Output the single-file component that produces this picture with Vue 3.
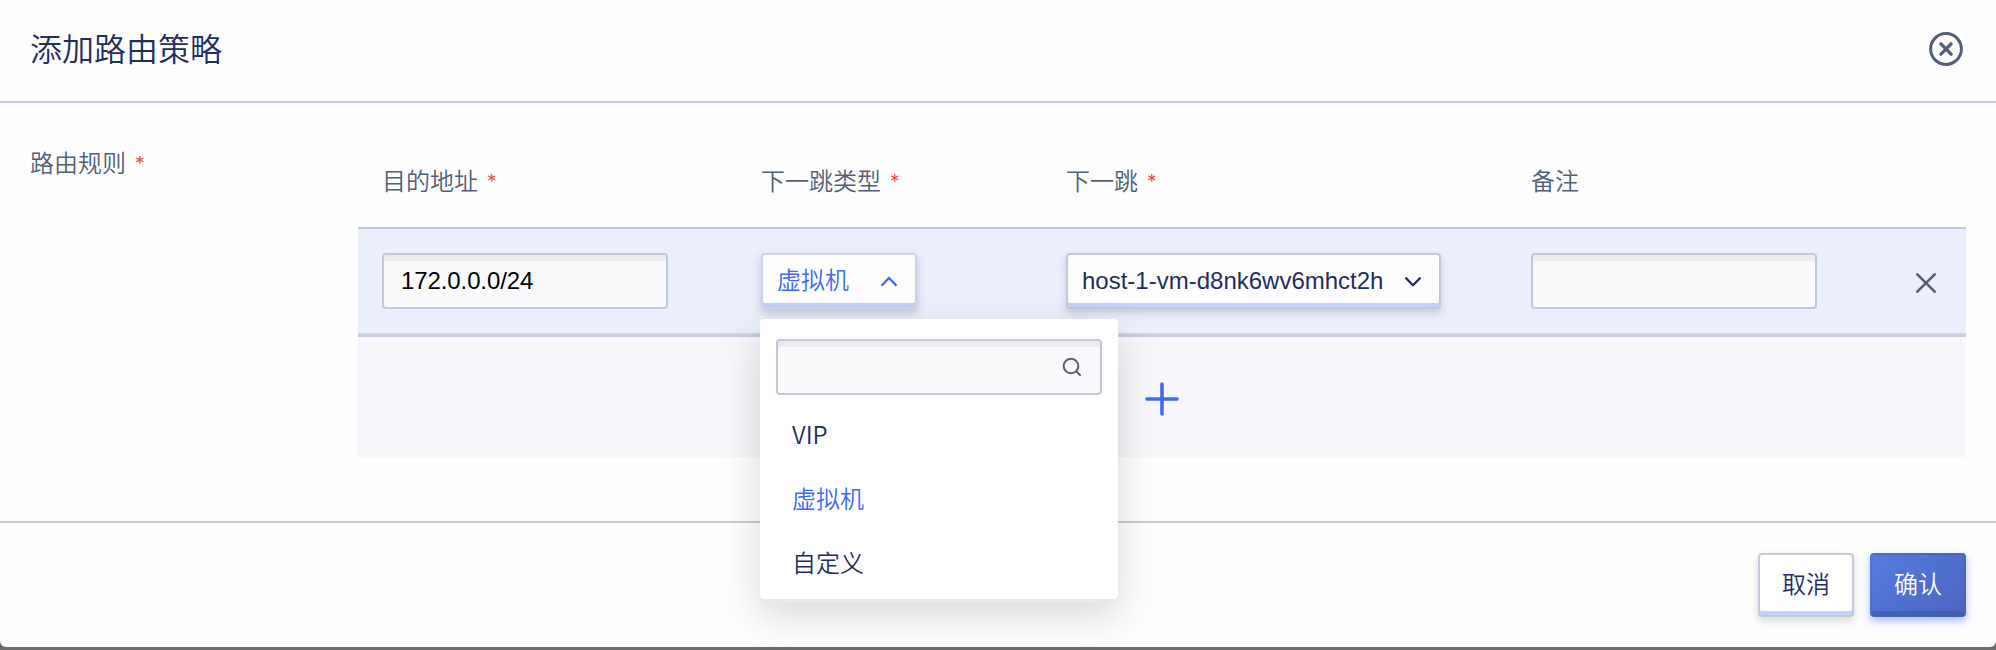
<script setup>
import { ref } from 'vue'

const columns = [
  { label: '目的地址', required: true },
  { label: '下一跳类型', required: true },
  { label: '下一跳', required: true },
  { label: '备注', required: false },
]
const options = ['VIP', '虚拟机', '自定义']
const hopType = ref('虚拟机')
const address = ref('172.0.0.0/24')
const hop = ref('host-1-vm-d8nk6wv6mhct2h')
const remark = ref('')
const keyword = ref('')
</script>

<template>
  <div class="page">
    <section class="dialog">
      <header class="head">
        <h1>添加路由策略</h1>
        <svg class="close" viewBox="0 0 34 34" fill="none" stroke="#525f76" stroke-linecap="round">
          <circle cx="17" cy="17" r="15.4" stroke-width="3" />
          <path d="M11.9 11.9 22.1 22.1M22.1 11.9 11.9 22.1" stroke-width="3.4" />
        </svg>
      </header>

      <main class="body">
        <div class="field-label">路由规则<i class="star">*</i></div>
        <div class="table">
          <div class="grid titles">
            <div v-for="c in columns" :key="c.label" class="title">
              {{ c.label }}<i v-if="c.required" class="star">*</i>
            </div>
          </div>
          <div class="grid row">
            <input v-model="address" class="input" />
            <div class="anchor">
              <button class="select open">
                <span>{{ hopType }}</span>
                <svg class="chevron" viewBox="0 0 18 11"><path d="M1.5 9.7 9 1.9l7.5 7.8" /></svg>
              </button>
              <div class="menu">
                <label class="search">
                  <input v-model="keyword" class="input" />
                  <svg viewBox="0 0 20 20" fill="none" stroke="#525f76" stroke-width="2" stroke-linecap="round">
                    <circle cx="9" cy="9" r="7.3" />
                    <path d="m14.3 14.3 3.7 3.7" />
                  </svg>
                </label>
                <div
                  v-for="o in options"
                  :key="o"
                  class="option"
                  :class="{ active: o === hopType }"
                  @click="hopType = o"
                >{{ o }}</div>
              </div>
            </div>
            <button class="select wide">
              <span>{{ hop }}</span>
              <svg class="chevron" viewBox="0 0 18 11"><path d="m1.5 1.6 7.5 7.6 7.5-7.6" /></svg>
            </button>
            <input v-model="remark" class="input" />
            <svg class="remove" viewBox="0 0 20 20"><path d="m1.3 1.3 17.4 17.4M18.7 1.3 1.3 18.7" /></svg>
          </div>
          <div class="add">
            <svg viewBox="0 0 34 34"><path d="M17 2v30M2 17h30" /></svg>
          </div>
        </div>
      </main>

      <footer class="foot">
        <button class="btn">取消</button>
        <button class="btn primary">确认</button>
      </footer>
    </section>
  </div>
</template>

<style>
body {
  background: #6b6b6d;
}
</style>

<style scoped>
.page,
.page * {
  box-sizing: border-box;
}
.page {
  height: 650px;
  overflow: hidden;
  background: #6b6b6d;
  color: #1f2d5f;
  font: 350 24px/32px "Noto Sans CJK SC", sans-serif;
}
.dialog {
  display: flex;
  flex-direction: column;
  height: 647px;
  background: #fefefe;
  border-radius: 0 0 6px 6px;
}
.head {
  display: flex;
  align-items: center;
  justify-content: space-between;
  flex: none;
  height: 103px;
  padding: 0 33px 4px 30px;
  border-bottom: 2px solid #c4c9dc;
}
h1 {
  margin: 0 0 3px;
  font-size: 32px;
  font-weight: 350;
  line-height: 44px;
}
.close {
  width: 34px;
  height: 34px;
}
.body {
  display: flex;
  flex: none;
  height: 418px;
  padding: 0 30px;
}
.field-label {
  flex: none;
  width: 328px;
  padding-top: 43px;
  color: #525f76;
}
.star {
  margin-left: 9px;
  color: #e8513f;
  font: 400 19px/1 Inter, sans-serif;
  vertical-align: 2px;
}
.table {
  flex: 1;
}
.grid {
  display: grid;
  grid-template-columns: 379px 305px 465px 385px 1fr;
  padding-left: 24px;
}
.titles {
  height: 124px;
  padding-top: 61px;
  color: #525f76;
}
.row {
  height: 110px;
  padding-top: 24px;
  background: #ebeffc;
  border-top: 2px solid #c1c8d9;
  border-bottom: 2px solid #c4c9dc;
  box-shadow: inset 0 -2px #cfd5e8;
}
.input {
  display: block;
  width: 286px;
  height: 56px;
  margin: 0;
  padding: 0 17px;
  border: 2px solid #c1c8d9;
  border-radius: 4px;
  outline: 0;
  background: #fafafc;
  box-shadow: inset 0 6px #ececee;
  color: #000;
  font: 24px "Liberation Sans", Arial, sans-serif;
  letter-spacing: -0.1px;
}
.anchor {
  position: relative;
}
.select {
  display: flex;
  align-items: center;
  justify-content: space-between;
  width: 156px;
  height: 56px;
  padding: 0 17px 0 14px;
  border: 2px solid #c1c8d9;
  border-radius: 4px;
  background: #fefefe;
  box-shadow: inset 0 -4px #c4d2f6, 0 4px 8px rgba(60, 65, 85, 0.22);
  color: #1f2d5f;
  font: 24px/32px "Liberation Sans", Arial, "Noto Sans CJK SC", sans-serif;
}
.select.open {
  border-color: #d0d4e8;
  box-shadow: inset 0 -4px #c1cff5, 0 4px 10px rgba(60, 65, 85, 0.24);
  color: #4069f6;
  font-weight: 350;
}
.select.wide {
  width: 375px;
}
.chevron {
  width: 18px;
  height: 11px;
  fill: none;
  stroke: currentColor;
  stroke-width: 2.3;
}
.menu {
  position: absolute;
  z-index: 5;
  top: 66px;
  left: -1px;
  width: 358px;
  height: 280px;
  padding: 20px 16px 0;
  border-radius: 4px;
  background: #fff;
  box-shadow: 0 4px #e9e9e9, 0 16px 40px rgba(0, 0, 0, 0.16);
}
.search {
  display: block;
  position: relative;
  margin-bottom: 7px;
}
.search .input {
  width: 326px;
}
.search svg {
  position: absolute;
  top: 18px;
  right: 20px;
  width: 20px;
  height: 20px;
}
.option {
  height: 64px;
  padding-left: 16px;
  line-height: 64px;
}
.option.active {
  color: #4069f6;
}
.remove {
  width: 20px;
  height: 20px;
  margin-top: 20px;
  fill: none;
  stroke: #525f76;
  stroke-width: 2.6;
  stroke-linecap: round;
}
.add {
  display: flex;
  align-items: center;
  justify-content: center;
  height: 120px;
  background: #f6f6fb;
}
.add svg {
  width: 34px;
  height: 34px;
  margin-top: 4px;
  fill: none;
  stroke: #4069f6;
  stroke-width: 3.6;
  stroke-linecap: round;
}
.foot {
  display: flex;
  flex: 1;
  gap: 16px;
  justify-content: flex-end;
  padding: 30px 30px 0;
  border-top: 2px solid #c4c9dc;
}
.btn {
  width: 96px;
  height: 64px;
  padding: 0 0 4px;
  border: 2px solid #c4cadb;
  border-radius: 4px;
  background: #fff;
  box-shadow: inset 0 -4px #c4d2f6, 0 4px 8px rgba(60, 65, 85, 0.2);
  color: #1f2d5f;
  font: inherit;
}
.btn.primary {
  border-color: rgba(58, 82, 158, 0.3) rgba(58, 82, 158, 0.12) rgba(58, 82, 158, 0.5);
  background: linear-gradient(135deg, #577be2, #4965bd) border-box;
  box-shadow: inset 0 -4px rgba(58, 82, 158, 0.5), 0 4px 8px rgba(64, 105, 246, 0.45);
  color: #fff;
}
</style>
